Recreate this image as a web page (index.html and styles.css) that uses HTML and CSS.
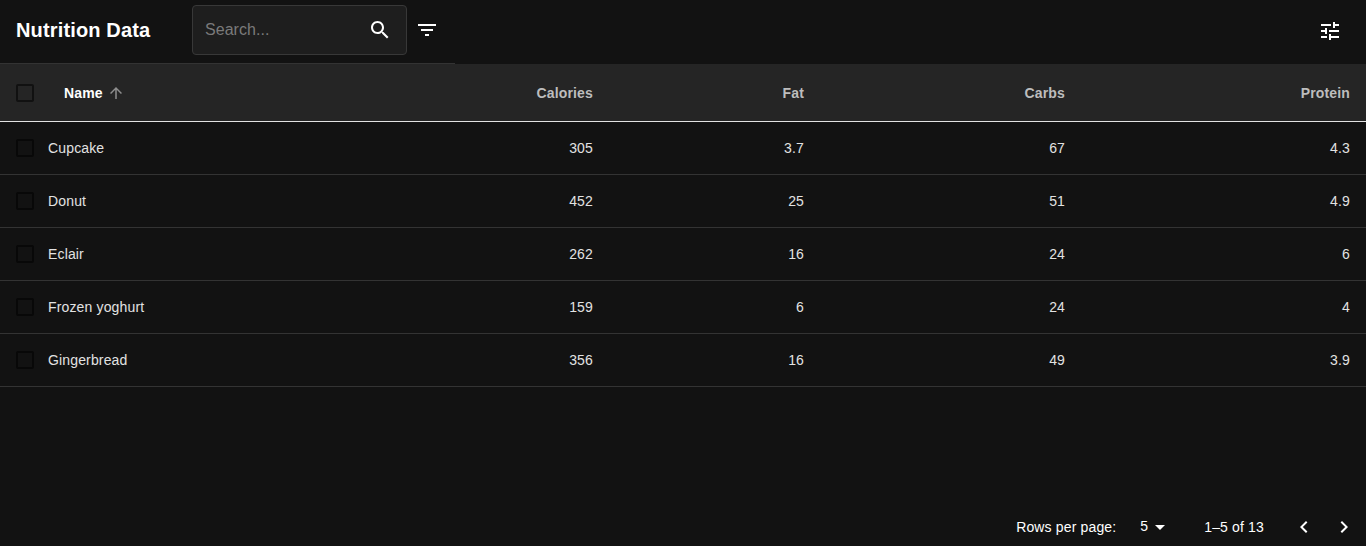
FILE: index.html
```html
<!DOCTYPE html>
<html lang="en">
<head>
<meta charset="utf-8">
<title>Nutrition Data</title>
<link rel="stylesheet" href="styles.css">
</head>
<body>
<svg class="defs" width="0" height="0" aria-hidden="true">
  <symbol id="box" viewBox="0 0 24 24"><path d="M19 5v14H5V5h14m0-2H5c-1.1 0-2 .9-2 2v14c0 1.1.9 2 2 2h14c1.1 0 2-.9 2-2V5c0-1.1-.9-2-2-2z"/></symbol>
</svg>
<header class="toolbar">
  <div class="toolbar-main">
    <h1 class="title">Nutrition Data</h1>
    <div class="search">
      <input class="search-input" type="text" placeholder="Search..." aria-label="Search">
      <svg class="icon" viewBox="0 0 24 24"><path d="M15.5 14h-.79l-.28-.27C15.41 12.59 16 11.11 16 9.5 16 5.91 13.09 3 9.5 3S3 5.91 3 9.5 5.91 16 9.5 16c1.61 0 3.09-.59 4.23-1.57l.27.28v.79l5 4.99L20.49 19l-4.99-5zm-6 0C7.01 14 5 11.99 5 9.5S7.01 5 9.5 5 14 7.01 14 9.5 11.99 14 9.5 14z"/></svg>
    </div>
    <svg class="icon filter" viewBox="0 0 24 24"><path d="M10 18h4v-2h-4v2zM3 6v2h18V6H3zm3 7h12v-2H6v2z"/></svg>
  </div>
  <svg class="icon tune" viewBox="0 0 24 24"><path d="M3 17v2h6v-2H3zM3 5v2h10V5H3zm10 16v-2h8v-2h-8v-2h-2v6h2zM7 9v2H3v2h4v2h2V9H7zm14 4v-2H11v2h10zm-6-4h2V7h4V5h-4V3h-2v6z"/></svg>
</header>
<main class="table">
  <div class="row head">
    <svg class="check"><use href="#box"/></svg>
    <span class="name sorted">Name <svg class="arrow" viewBox="0 0 24 24"><path d="M4 12l1.41 1.41L11 7.83V20h2V7.83l5.58 5.59L20 12l-8-8-8 8z"/></svg></span>
    <span>Calories</span><span>Fat</span><span>Carbs</span><span>Protein</span>
  </div>
  <div class="row"><svg class="check"><use href="#box"/></svg><span class="name">Cupcake</span><span>305</span><span>3.7</span><span>67</span><span>4.3</span></div>
  <div class="row"><svg class="check"><use href="#box"/></svg><span class="name">Donut</span><span>452</span><span>25</span><span>51</span><span>4.9</span></div>
  <div class="row"><svg class="check"><use href="#box"/></svg><span class="name">Eclair</span><span>262</span><span>16</span><span>24</span><span>6</span></div>
  <div class="row"><svg class="check"><use href="#box"/></svg><span class="name">Frozen yoghurt</span><span>159</span><span>6</span><span>24</span><span>4</span></div>
  <div class="row"><svg class="check"><use href="#box"/></svg><span class="name">Gingerbread</span><span>356</span><span>16</span><span>49</span><span>3.9</span></div>
</main>
<footer class="pagination">
  <span class="rows-label">Rows per page:</span>
  <span class="rows-value">5</span>
  <svg class="icon caret" viewBox="0 0 24 24"><path d="M7 10l5 5 5-5z"/></svg>
  <span class="range">1–5 of 13</span>
  <svg class="icon prev" viewBox="0 0 24 24"><path d="M15.41 7.41L14 6l-6 6 6 6 1.41-1.41L10.83 12z"/></svg>
  <svg class="icon" viewBox="0 0 24 24"><path d="M10 6L8.59 7.41 13.17 12l-4.58 4.59L10 18l6-6z"/></svg>
</footer>
</body>
</html>
```
FILE: styles.css
```css
* { box-sizing: border-box; }
body {
  margin: 0;
  height: 546px;
  display: flex;
  flex-direction: column;
  overflow: hidden;
  background: #121212;
  color: #fff;
  font: 14px/20px "Liberation Sans", Arial, sans-serif;
  letter-spacing: 0.15px;
}
.defs { display: none; }
.icon { width: 24px; height: 24px; flex: none; fill: #fff; }
.toolbar {
  height: 64px;
  display: flex;
  justify-content: space-between;
  align-items: flex-start;
}
.toolbar-main {
  width: 455px;
  height: 64px;
  padding: 5px 0 0 16px;
  display: flex;
  align-items: flex-start;
  border-bottom: 1px solid #333;
}
.title {
  width: 176px;
  margin: 0;
  font-size: 20px;
  font-weight: 700;
  line-height: 50px;
}
.search {
  width: 215px;
  height: 50px;
  padding: 0 14px 0 12px;
  display: flex;
  align-items: center;
  border: 1px solid #383838;
  border-radius: 4px;
  background: #1e1e1e;
}
.search-input {
  flex: 1;
  min-width: 0;
  padding: 0;
  border: 0;
  outline: 0;
  background: none;
  color: #fff;
  font: 16px/24px "Liberation Sans", Arial, sans-serif;
  letter-spacing: 0.05px;
}
.search-input::placeholder { color: #7a7a7a; opacity: 1; }
.filter { margin: 13px 0 0 8px; }
.tune { margin: 19px 24px 0 0; }
.row {
  height: 53px;
  display: grid;
  grid-template-columns: 48px 1fr 160px 211px 261px 285px;
  align-items: center;
  border-bottom: 1px solid #333;
  color: #e2e2e2;
}
.row > span { padding-right: 16px; text-align: right; }
.row > .name { padding: 0; text-align: left; }
.check { width: 24px; height: 24px; margin-left: 13px; fill: #080808; }
.head {
  height: 58px;
  background: #252525;
  border-color: #e2e2e2;
  color: #bdbdbd;
  font-weight: 700;
}
.head > .sorted { display: flex; align-items: center; gap: 4px; padding-left: 16px; color: #fff; }
.head .check { fill: #111; }
.arrow { width: 18px; height: 18px; fill: #8e8e8e; }
.pagination {
  margin-top: auto;
  height: 38px;
  padding: 0 10px 0 0;
  display: flex;
  justify-content: flex-end;
  align-items: center;
}
.rows-value { margin: -2px 0 0 24px; }
.caret { margin: 0 32px 0 0; }
.prev { margin: 0 16px 0 28px; }
```
